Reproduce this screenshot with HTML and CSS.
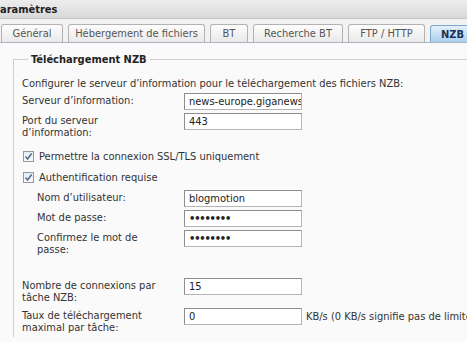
FILE: index.html
```html
<!DOCTYPE html>
<html lang="fr">
<head>
<meta charset="utf-8">
<link rel="stylesheet" href="styles.css">
</head>
<body>
<div class="window">
  <div class="titlebar"><span class="title">Paramètres</span></div>
  <div class="tabs">
    <div class="tab t1">Général</div>
    <div class="tab t2">Hébergement de fichiers</div>
    <div class="tab t3">BT</div>
    <div class="tab t4">Recherche BT</div>
    <div class="tab t5">FTP / HTTP</div>
    <div class="tab active">NZB</div>
  </div>
  <div class="content">
    <fieldset class="group">
      <legend>Téléchargement NZB</legend>
      <p class="intro">Configurer le serveur d’information pour le téléchargement des fichiers NZB:</p>
      <div class="row">
        <label class="lbl">Serveur d’information:</label>
        <input class="field" type="text" value="news-europe.giganews.com">
      </div>
      <div class="row">
        <label class="lbl">Port du serveur d’information:</label>
        <input class="field" type="text" value="443">
      </div>
      <div class="check first"><span class="box"><svg width="9" height="9" viewBox="0 0 9 9"><path d="M1.5 4.5 L3.6 7 L7.6 1.5" fill="none" stroke="#4d6b8a" stroke-width="1.5"/></svg></span>Permettre la connexion SSL/TLS uniquement</div>
      <div class="check"><span class="box"><svg width="9" height="9" viewBox="0 0 9 9"><path d="M1.5 4.5 L3.6 7 L7.6 1.5" fill="none" stroke="#4d6b8a" stroke-width="1.5"/></svg></span>Authentification requise</div>
      <div class="sub">
        <div class="row">
          <label class="lbl">Nom d’utilisateur:</label>
          <input class="field" type="text" value="blogmotion">
        </div>
        <div class="row">
          <label class="lbl">Mot de passe:</label>
          <input class="field pw" type="password" value="12345678">
        </div>
        <div class="row">
          <label class="lbl">Confirmez le mot de passe:</label>
          <input class="field pw" type="password" value="12345678">
        </div>
      </div>
      <div class="row spaced">
        <label class="lbl">Nombre de connexions par tâche NZB:</label>
        <input class="field" type="text" value="15">
      </div>
      <div class="row">
        <label class="lbl">Taux de téléchargement maximal par tâche:</label>
        <input class="field" type="text" value="0">
        <span class="unit">KB/s (0 KB/s signifie pas de limite)</span>
      </div>
    </fieldset>
  </div>
</div>
</body>
</html>
```

FILE: styles.css
```css
html, body {
  margin: 0;
  padding: 0;
  background: #fafafa;
  overflow: hidden;
}
body {
  font-family: "DejaVu Sans Condensed", "DejaVu Sans", sans-serif;
  font-size: 11px;
  color: #333;
}
.window {
  width: 467px;
  height: 342px;
  overflow: hidden;
}
.titlebar {
  height: 18px;
  background: linear-gradient(#ededed, #d9d9d9);
  border-bottom: 1px solid #c4c4c4;
  display: flex;
  align-items: center;
  overflow: hidden;
}
.title {
  font-weight: bold;
  color: #222;
  margin-left: -7px;
}
.tabs {
  display: flex;
  gap: 5px;
  padding: 5px 0 0 1px;
  background: #f2f2f2;
  border-bottom: 1px solid #a9b4bf;
  white-space: nowrap;
}
.tab {
  height: 18px;
  box-sizing: border-box;
  border: 1px solid #b2b2b2;
  border-bottom: none;
  border-radius: 3px 3px 0 0;
  background: linear-gradient(#fdfdfd, #e9e9e9);
  color: #555;
  display: flex;
  align-items: center;
  justify-content: center;
  flex: none;
}
.t1 { width: 62px; }
.t2 { width: 137px; }
.t3 { width: 38px; }
.t4 { width: 90px; }
.t5 { width: 77px; }
.tab.active {
  width: 45px;
  margin-top: 1px;
  height: 17px;
  border-color: #7fa7c9;
  background: linear-gradient(#e4f1fb, #a9d0ee);
  color: #1d2f55;
  font-weight: bold;
}
.content {
  padding: 10px 0 0 13px;
}
.group {
  margin: 0;
  width: 520px;
  padding: 11px 0 0 8px;
  border: none;
  border-top: 1px solid #cfcfcf;
  border-left: 1px solid #cfcfcf;
  min-width: 0;
}
.group legend {
  font-weight: bold;
  color: #222;
  padding: 0 3px;
  margin-left: 6px;
}
.intro {
  margin: 0 0 2px 0;
  line-height: 14px;
}
.row {
  display: flex;
  align-items: flex-start;
  margin-bottom: 3px;
}
.lbl {
  width: 140px;
  margin-right: 22px;
  flex: none;
  line-height: 12px;
  padding-top: 2px;
}
.sub .row {
  padding-left: 15px;
}
.sub .lbl {
  width: 125px;
}
.field {
  width: 118px;
  height: 17px;
  box-sizing: border-box;
  border: 1px solid #8e8e8e;
  border-right-color: #b5b5b5;
  border-bottom-color: #b5b5b5;
  background: #fff;
  font: inherit;
  color: #222;
  padding: 0 0 0 4px;
  margin: 0;
  flex: none;
}
.pw {
  font-weight: bold;
  letter-spacing: -1.2px;
}
.unit {
  margin-left: 4px;
  padding-top: 2px;
  white-space: nowrap;
}
.check {
  display: flex;
  align-items: center;
  gap: 5px;
  height: 20px;
  margin-left: 1px;
}
.check.first {
  margin-top: 7px;
}
.check + .check {
  margin-top: 1px;
}
.box {
  width: 11px;
  height: 11px;
  box-sizing: border-box;
  border: 1px solid #8f9aa6;
  background: linear-gradient(#e9ecef, #fafafa);
  display: flex;
  align-items: center;
  justify-content: center;
  flex: none;
}
.sub {
  margin-top: 3px;
}
.row.spaced {
  margin-top: 22px;
}
.row.spaced + .row {
  margin-top: 4px;
}
```
